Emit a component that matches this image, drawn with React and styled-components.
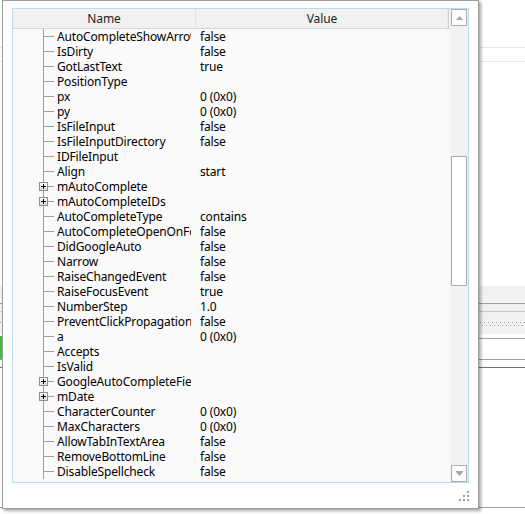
import React from 'react';
import styled, { createGlobalStyle } from 'styled-components';

const GlobalStyle = createGlobalStyle`
  html, body { margin: 0; padding: 0; background: #ffffff; }
  body { width: 525px; height: 514px; overflow: hidden; font-family: "Noto Sans", "Open Sans", sans-serif; }
`;

const rows = [
  { name: 'AutoCompleteShowArrow', value: 'false' },
  { name: 'IsDirty', value: 'false' },
  { name: 'GotLastText', value: 'true' },
  { name: 'PositionType', value: '' },
  { name: 'px', value: '0 (0x0)' },
  { name: 'py', value: '0 (0x0)' },
  { name: 'IsFileInput', value: 'false' },
  { name: 'IsFileInputDirectory', value: 'false' },
  { name: 'IDFileInput', value: '' },
  { name: 'Align', value: 'start' },
  { name: 'mAutoComplete', value: '', expandable: true },
  { name: 'mAutoCompleteIDs', value: '', expandable: true },
  { name: 'AutoCompleteType', value: 'contains' },
  { name: 'AutoCompleteOpenOnFocus', value: 'false' },
  { name: 'DidGoogleAuto', value: 'false' },
  { name: 'Narrow', value: 'false' },
  { name: 'RaiseChangedEvent', value: 'false' },
  { name: 'RaiseFocusEvent', value: 'true' },
  { name: 'NumberStep', value: '1.0' },
  { name: 'PreventClickPropagation', value: 'false' },
  { name: 'a', value: '0 (0x0)' },
  { name: 'Accepts', value: '' },
  { name: 'IsValid', value: '' },
  { name: 'GoogleAutoCompleteField', value: '', expandable: true },
  { name: 'mDate', value: '', expandable: true },
  { name: 'CharacterCounter', value: '0 (0x0)' },
  { name: 'MaxCharacters', value: '0 (0x0)' },
  { name: 'AllowTabInTextArea', value: 'false' },
  { name: 'RemoveBottomLine', value: 'false' },
  { name: 'DisableSpellcheck', value: 'false' },
];

/* ---------- background application (under the popup) ---------- */
const Page = styled.div`
  position: relative;
  width: 525px;
  height: 514px;
  overflow: hidden;
  background: #ffffff;
`;

const Backdrop = styled.div`
  display: flex;
  flex-direction: column;
  width: 525px;
`;

const Band = styled.div`
  height: ${(p) => p.$h}px;
  background: ${(p) => p.$bg || '#ffffff'};
  border-bottom: 1px solid ${(p) => p.$line || 'transparent'};
`;

const DottedStrip = styled.div`
  height: 22px;
  background: #f2f2f2;
  padding-top: 10px;
  box-sizing: border-box;
  display: flex;
  flex-direction: column;
  gap: 2px;
`;

const Dots = styled.div`
  height: 1px;
  background-image: linear-gradient(to right, #9a9a9a 1px, transparent 1px);
  background-size: 4px 1px;
  background-position: ${(p) => (p.$shift ? '2px 0' : '0 0')};
`;

const InputRow = styled.div`
  height: 20px;
  border-bottom: 1px solid #a0a0a0;
`;

const GreenField = styled.div`
  width: 40px;
  height: 23px;
  margin-left: -38px;
  margin-top: -3px;
  border: 2px solid #3fbf3f;
  box-sizing: border-box;
  background: #ffffff;
`;

/* ---------- popup window ---------- */
const Window = styled.div`
  position: absolute;
  left: 2px;
  top: 0;
  width: 477px;
  height: 509px;
  box-sizing: border-box;
  border: 1px solid #9c9c9c;
  background: #ffffff;
  box-shadow: 2px 2px 3px rgba(0, 0, 0, 0.35);
  padding: 7px 0 0 9px;
`;

const ListView = styled.div`
  width: 457px;
  height: 475px;
  box-sizing: border-box;
  border: 1px solid #bcdcee;
  background: #fafafa;
  display: flex;
  overflow: hidden;
`;

const TableArea = styled.div`
  width: 437px;
  display: flex;
  flex-direction: column;
  overflow: hidden;
`;

const Header = styled.div`
  height: 20px;
  box-sizing: border-box;
  display: flex;
  border-bottom: 1px solid #d5d5d5;
  background: #f1f1f1;
`;

const HeaderCell = styled.div`
  width: ${(p) => p.$w}px;
  box-sizing: border-box;
  display: flex;
  align-items: center;
  justify-content: center;
  font-size: 12px;
  letter-spacing: -0.1px;
  color: #1e1e1e;
  border-right: 1px solid ${(p) => (p.$last ? '#d0d0d0' : '#e3e3e3')};
  box-shadow: ${(p) => (p.$last ? 'inset -1px 0 0 #e8e8e8' : 'none')};
  padding-bottom: 1px;
`;

const Row = styled.div`
  height: 15px;
  display: flex;
  align-items: center;
  font-size: 12px;
  letter-spacing: -0.15px;
  color: #000000;
  white-space: nowrap;
`;

const TreeCell = styled.div`
  position: relative;
  width: 44px;
  height: 15px;
  flex: none;

  &::before {
    content: '';
    position: absolute;
    left: 30px;
    top: 0;
    width: 1px;
    height: 15px;
    background: #a0a0a0;
  }
  &::after {
    content: '';
    position: absolute;
    left: 31px;
    top: 7px;
    width: 10px;
    height: 1px;
    background: #a0a0a0;
  }
`;

const Expander = styled.div`
  position: absolute;
  left: 26px;
  top: 3px;
  width: 9px;
  height: 9px;
  box-sizing: border-box;
  border: 1px solid #8f8f8f;
  background: linear-gradient(#ffffff, #dcdcdc);
  z-index: 1;

  &::before {
    content: '';
    position: absolute;
    left: 1px;
    top: 3px;
    width: 5px;
    height: 1px;
    background: #000;
  }
  &::after {
    content: '';
    position: absolute;
    left: 3px;
    top: 1px;
    width: 1px;
    height: 5px;
    background: #000;
  }
`;

const NameCell = styled.div`
  width: 134px;
  flex: none;
  overflow: hidden;
  text-overflow: clip;
  line-height: 15px;
`;

const ValueCell = styled.div`
  margin-left: 9px;
  line-height: 15px;
`;

const Scrollbar = styled.div`
  width: 18px;
  background: #f2f2f2;
  display: flex;
  flex-direction: column;
  padding: 0 1px 0 1px;
  box-sizing: border-box;
`;

const ScrollButton = styled.div`
  height: 17px;
  box-sizing: border-box;
  border: 1px solid #acacac;
  background: #fcfcfc;
  display: flex;
  align-items: center;
  justify-content: center;
`;

const Thumb = styled.div`
  height: 130px;
  margin-top: 130px;
  box-sizing: border-box;
  border: 1px solid #acacac;
  background: #ffffff;
`;

const Spacer = styled.div`
  flex: 1;
`;

const Grip = styled.svg`
  position: absolute;
  right: 8px;
  bottom: 6px;
`;

function TreeRow({ row }) {
  return (
    <Row>
      <TreeCell>{row.expandable && <Expander />}</TreeCell>
      <NameCell>{row.name}</NameCell>
      <ValueCell>{row.value}</ValueCell>
    </Row>
  );
}

export default function App() {
  return (
    <Page>
      <GlobalStyle />
      <Backdrop>
        <Band $h={47} $line="#e8e8e8" />
        <Band $h={13} $line="#e8e8e8" />
        <Band $h={223} />
        <Band $h={17} $bg="#f2f2f2" $line="#a0a0a0" />
        <Band $h={7} $bg="#f0f0f0" $line="#c8c8c8" />
        <DottedStrip>
          <Dots />
          <Dots $shift />
        </DottedStrip>
        <Band $h={4} $line="#a0a0a0" />
        <InputRow>
          <GreenField />
        </InputRow>
        <Band $h={7} $line="#707080" />
        <Band $h={139} $line="#a0a0a0" />
      </Backdrop>

      <Window>
        <ListView>
          <TableArea>
            <Header>
              <HeaderCell $w={183}>Name</HeaderCell>
              <HeaderCell $w={253} $last>Value</HeaderCell>
            </Header>
            {rows.map((r) => (
              <TreeRow key={r.name} row={r} />
            ))}
          </TableArea>
          <Scrollbar>
            <ScrollButton>
              <svg width="7" height="4" viewBox="0 0 7 4">
                <path d="M3.5 0 L7 4 L0 4 Z" fill="#a6a6a6" />
              </svg>
            </ScrollButton>
            <Thumb />
            <Spacer />
            <ScrollButton>
              <svg width="7" height="5" viewBox="0 0 7 5">
                <rect x="0" y="0" width="7" height="1" fill="#a6a6a6" />
                <path d="M0 1 L7 1 L3.5 5 Z" fill="#a6a6a6" />
              </svg>
            </ScrollButton>
          </Scrollbar>
        </ListView>
        <Grip width="11" height="11" viewBox="0 0 11 11">
          <rect x="8" y="0" width="2" height="2" fill="#a0a0a0" />
          <rect x="4" y="4" width="2" height="2" fill="#a0a0a0" />
          <rect x="8" y="4" width="2" height="2" fill="#a0a0a0" />
          <rect x="0" y="8" width="2" height="2" fill="#a0a0a0" />
          <rect x="4" y="8" width="2" height="2" fill="#a0a0a0" />
          <rect x="8" y="8" width="2" height="2" fill="#a0a0a0" />
        </Grip>
      </Window>
    </Page>
  );
}
